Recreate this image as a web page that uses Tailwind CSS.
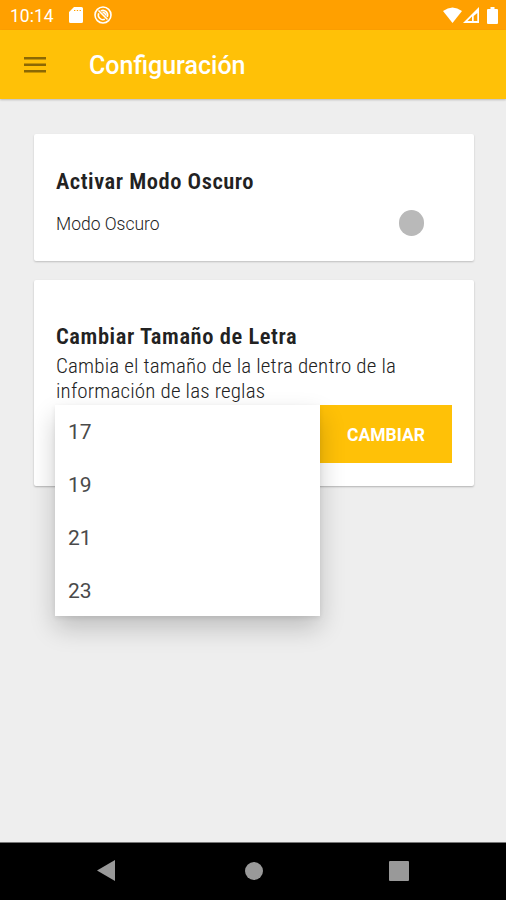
<!DOCTYPE html>
<html lang="es">
<head>
<meta charset="utf-8">
<title>Configuración</title>
<script src="https://cdn.jsdelivr.net/npm/@tailwindcss/browser@4"></script>
</head>
<body class="w-[506px] h-[900px] overflow-hidden bg-[#eeeeee] font-['Roboto',sans-serif] flex flex-col text-[#222]">
  <div class="h-[30px] shrink-0 bg-[#ffa000] flex items-center text-white">
    <span class="ml-[10px] w-[59px] text-[17.500px] leading-[30px] pt-[2px] whitespace-nowrap">10:14</span>
    <svg class="w-[14px] h-[16px]" viewBox="0 0 14 16"><path fill="#fff" fill-rule="evenodd" d="M5 0h7.500a1.500 1.500 0 0 1 1.500 1.500v13a1.500 1.500 0 0 1-1.500 1.500h-11A1.500 1.500 0 0 1 0 14.500V5zM5 3v1h1.300V3zM7.800 3v1h1.300V3zM10.600 3v1h1.300V3z"/></svg>
    <svg class="ml-[11px] w-[18px] h-[18px]" viewBox="0 0 18 18" fill="none" stroke="#fff"><circle cx="9" cy="9" r="8" stroke-width="1.600"/><path stroke-width="1.600" d="M4.500 4.500l9 9M6.800 4.900A4.700 4.700 0 0 1 13.200 11M4.700 7.200A4.700 4.700 0 0 0 10.800 13.300M8.500 6.500a2.600 2.600 0 0 1 3 3"/></svg>
    <svg class="ml-auto w-[19px] h-[16px]" viewBox="0 0 19 16"><path fill="#fff" d="M9.500 16 0 4Q9.500-3 19 4z"/></svg>
    <svg class="ml-[1px] w-[16px] h-[16px]" viewBox="0 0 16 16"><path fill="#fff" fill-rule="evenodd" d="M0 16 16 0v16zM4.500 14h4.500V9.500zM10.700 14h3.600V6l-3.600 3z"/></svg>
    <svg class="ml-[8px] mr-[8px] w-[11px] h-[17px]" viewBox="0 0 11 17"><path fill="#fff" d="M3.500 0h4v2H10a1 1 0 0 1 1 1v13a1 1 0 0 1-1 1H1a1 1 0 0 1-1-1V3a1 1 0 0 1 1-1h2.500z"/></svg>
  </div>
  <div class="h-[69px] shrink-0 bg-[#ffc107] shadow-[0_1px_2px_rgba(0,0,0,0.22)] flex items-center">
    <svg class="ml-[24px] w-[22px] h-[16px]" viewBox="0 0 22 16"><path fill="#8b6904" d="M0 0h22v2.500H0zM0 6.500h22V9H0zM0 13h22v2.500H0z"/></svg>
    <h1 class="ml-[43px] mt-[2px] text-[25px] leading-[30px] font-medium text-white whitespace-nowrap">Configuración</h1>
  </div>
  <main class="grow pl-[34px] pr-[32px] pt-[35px]">
    <section class="h-[127px] bg-white rounded-[2px] shadow-[0_1px_2px_rgba(0,0,0,0.2)] px-[22px] pt-[33px]">
      <h2 class="text-[22.500px] leading-[28px] font-semibold tracking-[0.52px] whitespace-nowrap [font-stretch:75%]">Activar Modo Oscuro</h2>
      <div class="flex items-center justify-between mt-[15px] h-[26px] pr-[28px]">
        <span class="text-[17.500px] font-light text-[#222] pt-[2px]">Modo Oscuro</span>
        <span class="w-[25px] h-[26px] rounded-full bg-[#b9b9b9]"></span>
      </div>
    </section>
    <section class="relative mt-[19px] h-[206px] bg-white rounded-[2px] shadow-[0_1px_2px_rgba(0,0,0,0.25)] px-[22px] pt-[42px]">
      <h2 class="text-[22.500px] leading-[28px] font-semibold tracking-[0.56px] whitespace-nowrap [font-stretch:75%]">Cambiar Tamaño de Letra</h2>
      <p class="mt-[4px] text-[21px] leading-[25px] whitespace-nowrap font-light tracking-[0.16px] [font-stretch:75%]">Cambia el tamaño de la letra dentro de la<br>información de las reglas</p>
      <div class="flex justify-end mt-[1px]">
        <button class="w-[132px] h-[58px] bg-[#ffc107] text-white text-[17.500px] font-bold pt-[2px]">CAMBIAR</button>
      </div>
      <ul class="absolute left-[21px] top-[125px] w-[265px] h-[211px] bg-white shadow-[0_12px_24px_rgba(0,0,0,0.2),0_2px_5px_rgba(0,0,0,0.08)] text-[21px] text-[#4a4a4a] pl-[13px] pt-[1px]">
        <li class="h-[53px] leading-[53px]">17</li>
        <li class="h-[53px] leading-[53px]">19</li>
        <li class="h-[53px] leading-[53px]">21</li>
        <li class="h-[51px] leading-[53px]">23</li>
      </ul>
    </section>
  </main>
  <nav class="h-[58px] shrink-0 bg-black border-t border-[#777] flex items-center pl-[97px] pb-[2px]">
    <svg class="w-[18px] h-[21px]" viewBox="0 0 18 21"><path fill="#999" d="M18 0v21L0 10.500z"/></svg>
    <span class="ml-[130px] w-[18px] h-[18px] rounded-full bg-[#999]"></span>
    <span class="ml-[126px] w-[20px] h-[20px] rounded-[1px] bg-[#999]"></span>
  </nav>
</body>
</html>
